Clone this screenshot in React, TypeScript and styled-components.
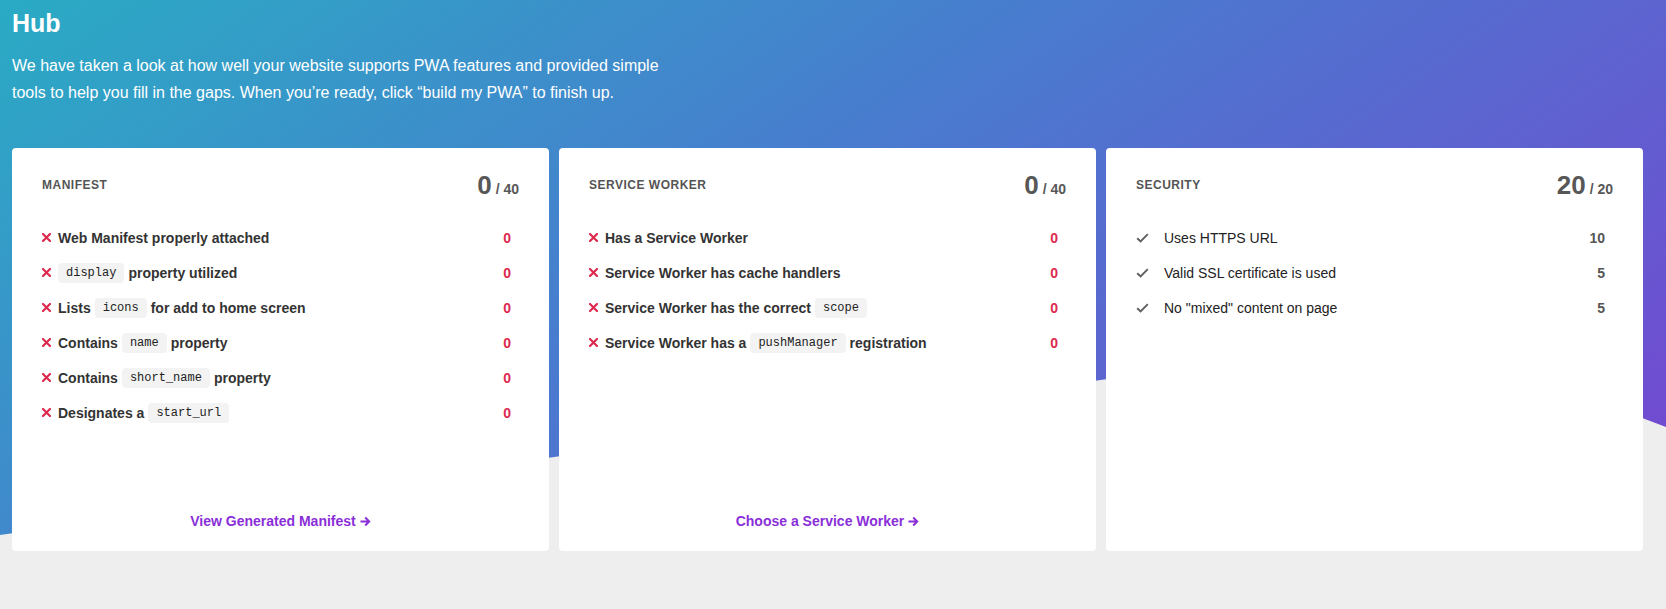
import React from "react";
import styled, { createGlobalStyle } from "styled-components";

const GlobalStyle = createGlobalStyle`
  * { box-sizing: border-box; }
  body {
    margin: 0;
    background: #eeeeee;
    font-family: "Liberation Sans", Arial, Helvetica, sans-serif;
    -webkit-font-smoothing: antialiased;
  }
`;

const Page = styled.div`
  position: relative;
  min-height: 609px;
  padding: 8px 23px 40px 12px;
  overflow: hidden;
`;

// the coloured wave behind the header and top of the cards
const Backdrop = styled.div`
  position: absolute;
  top: 0;
  left: 0;
  width: 100%;
  height: 540px;
  background: linear-gradient(145deg, #2aabc4 0%, #4a7acf 45%, #7645d1 100%);
  clip-path: path("M0 535 L1150 373 Q1450 340 1666 427 L1666 0 L0 0 Z");
  z-index: 0;
`;

const Content = styled.div`
  position: relative;
  z-index: 1;
`;

const Title = styled.h1`
  margin: 0;
  font-size: 25px;
  line-height: 30px;
  font-weight: 700;
  color: #fff;
`;

const Intro = styled.p`
  margin: 14px 0 0;
  width: 670px;
  font-size: 16px;
  line-height: 27px;
  color: #fff;
`;

const Grid = styled.div`
  display: grid;
  grid-template-columns: repeat(3, 1fr);
  gap: 10px;
  margin-top: 42px;
`;

const Card = styled.section`
  display: flex;
  flex-direction: column;
  height: 403px;
  padding: 23px 30px 20px 30px;
  background: #fff;
  border-radius: 4px;
`;

const CardHeader = styled.header`
  display: flex;
  align-items: center;
  justify-content: space-between;
  height: 28px;
`;

const CardLabel = styled.h2`
  margin: 0;
  font-size: 12px;
  font-weight: 700;
  letter-spacing: 0.5px;
  text-transform: uppercase;
  color: #555;
`;

const Score = styled.div`
  display: flex;
  align-items: baseline;
  color: #575757;
  font-weight: 700;
`;

const ScoreValue = styled.span`
  font-size: 26px;
  line-height: 28px;
`;

const ScoreTotal = styled.span`
  margin-left: 4px;
  font-size: 14px;
`;

const List = styled.ul`
  flex: 1;
  list-style: none;
  margin: 21px 0 0;
  padding: 0 8px 0 0;
`;

const Row = styled.li`
  display: flex;
  align-items: center;
  height: 35px;
`;

const IconSlot = styled.span<{ $wide?: boolean }>`
  display: inline-flex;
  align-items: center;
  flex: none;
  width: ${(p) => (p.$wide ? "28px" : "16px")};
`;

const RowText = styled.span<{ $passed?: boolean }>`
  flex: 1;
  display: flex;
  align-items: center;
  gap: 4px;
  font-size: 14px;
  font-weight: ${(p) => (p.$passed ? 400 : 700)};
  color: ${(p) => (p.$passed ? "#222" : "#333")};
  white-space: nowrap;
`;

const Code = styled.code`
  display: inline-flex;
  align-items: center;
  height: 20px;
  padding: 0 8px;
  background: #f3f3f3;
  border-radius: 4px;
  font-family: "Liberation Mono", "Courier New", monospace;
  font-size: 12px;
  font-weight: 400;
  color: #222;
`;

const Points = styled.span<{ $passed?: boolean }>`
  font-size: 14px;
  font-weight: 700;
  color: ${(p) => (p.$passed ? "#555" : "#dc2a4f")};
`;

const Footer = styled.footer`
  text-align: center;
  line-height: 20px;
`;

const Link = styled.a`
  display: inline-flex;
  align-items: center;
  gap: 4px;
  font-size: 14px;
  font-weight: 700;
  color: #8a2fd8;
  text-decoration: none;
  cursor: pointer;
`;

const Cross = () => (
  <svg width="9" height="9" viewBox="0 0 9 9">
    <path d="M1 1 L8 8 M8 1 L1 8" stroke="#dc2a4f" strokeWidth="2.2" strokeLinecap="square" />
  </svg>
);

const Check = () => (
  <svg width="13" height="10" viewBox="0 0 13 10">
    <path d="M1.2 5.2 L4.6 8.5 L11.8 1.2" fill="none" stroke="#5f5f5f" strokeWidth="1.9" />
  </svg>
);

const Arrow = () => (
  <svg width="11" height="11" viewBox="0 0 11 11">
    <path d="M0.5 5.5 H9 M5.2 1.5 L9.2 5.5 L5.2 9.5" fill="none" stroke="#8a2fd8" strokeWidth="2" />
  </svg>
);

interface Item {
  label: React.ReactNode;
  points: number;
  passed: boolean;
}

interface Section {
  title: string;
  score: number;
  total: number;
  items: Item[];
  link?: string;
}

const sections: Section[] = [
  {
    title: "Manifest",
    score: 0,
    total: 40,
    link: "View Generated Manifest",
    items: [
      { label: <>Web Manifest properly attached</>, points: 0, passed: false },
      { label: <><Code>display</Code> property utilized</>, points: 0, passed: false },
      { label: <>Lists <Code>icons</Code> for add to home screen</>, points: 0, passed: false },
      { label: <>Contains <Code>name</Code> property</>, points: 0, passed: false },
      { label: <>Contains <Code>short_name</Code> property</>, points: 0, passed: false },
      { label: <>Designates a <Code>start_url</Code></>, points: 0, passed: false },
    ],
  },
  {
    title: "Service Worker",
    score: 0,
    total: 40,
    link: "Choose a Service Worker",
    items: [
      { label: <>Has a Service Worker</>, points: 0, passed: false },
      { label: <>Service Worker has cache handlers</>, points: 0, passed: false },
      { label: <>Service Worker has the correct <Code>scope</Code></>, points: 0, passed: false },
      { label: <>Service Worker has a <Code>pushManager</Code> registration</>, points: 0, passed: false },
    ],
  },
  {
    title: "Security",
    score: 20,
    total: 20,
    items: [
      { label: <>Uses HTTPS URL</>, points: 10, passed: true },
      { label: <>Valid SSL certificate is used</>, points: 5, passed: true },
      { label: <>No "mixed" content on page</>, points: 5, passed: true },
    ],
  },
];

function ScoreCard({ section }: { section: Section }) {
  return (
    <Card>
      <CardHeader>
        <CardLabel>{section.title}</CardLabel>
        <Score>
          <ScoreValue>{section.score}</ScoreValue>
          <ScoreTotal>/ {section.total}</ScoreTotal>
        </Score>
      </CardHeader>
      <List>
        {section.items.map((item, i) => (
          <Row key={i}>
            <IconSlot $wide={item.passed}>{item.passed ? <Check /> : <Cross />}</IconSlot>
            <RowText $passed={item.passed}>{item.label}</RowText>
            <Points $passed={item.passed}>{item.points}</Points>
          </Row>
        ))}
      </List>
      <Footer>
        {section.link && (
          <Link>
            {section.link}
            <Arrow />
          </Link>
        )}
      </Footer>
    </Card>
  );
}

export default function App() {
  return (
    <>
      <GlobalStyle />
      <Page>
        <Backdrop />
        <Content>
          <Title>Hub</Title>
          <Intro>
            We have taken a look at how well your website supports PWA features and provided simple
            tools to help you fill in the gaps. When you’re ready, click “build my PWA” to finish up.
          </Intro>
          <Grid>
            {sections.map((s) => (
              <ScoreCard key={s.title} section={s} />
            ))}
          </Grid>
        </Content>
      </Page>
    </>
  );
}
